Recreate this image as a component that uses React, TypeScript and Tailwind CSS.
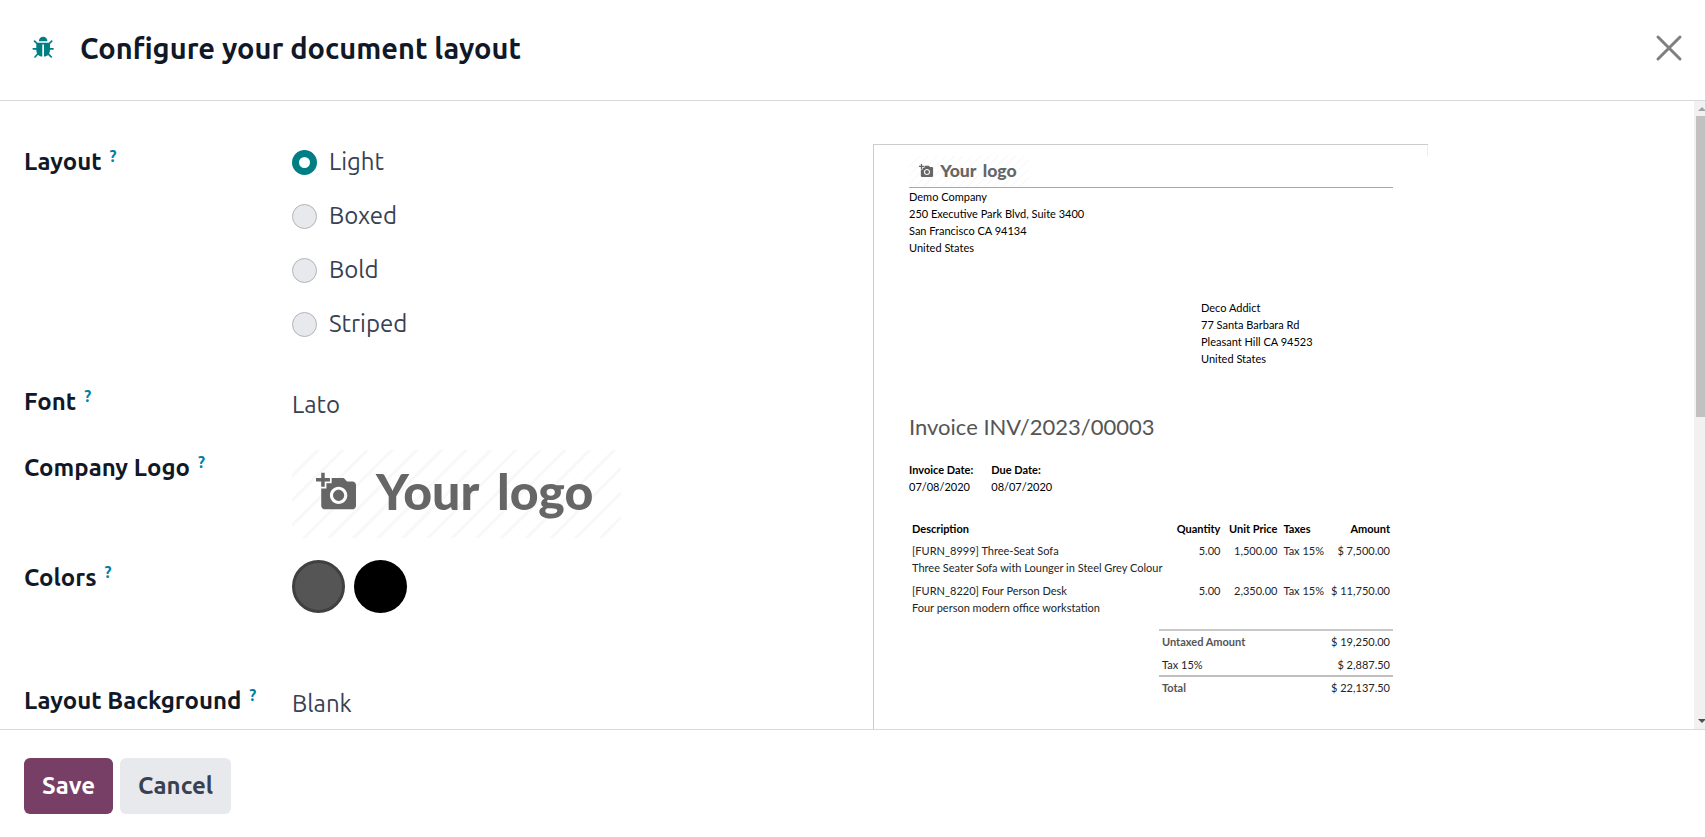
import { useState } from "react";

const layouts = ["Light", "Boxed", "Bold", "Striped"];

const lines = [
  { name: "[FURN_8999] Three-Seat Sofa", note: "Three Seater Sofa with Lounger in Steel Grey Colour", qty: "5.00", price: "1,500.00", tax: "Tax 15%", amount: "$ 7,500.00" },
  { name: "[FURN_8220] Four Person Desk", note: "Four person modern office workstation", qty: "5.00", price: "2,350.00", tax: "Tax 15%", amount: "$ 11,750.00" },
];

const stripes = Array.from({ length: 17 }, (_, i) => -62 + i * 24.7);

function BugIcon() {
  return (
    <svg viewBox="0 0 1792 1792" className="size-6" fill="currentColor" aria-hidden="true">
      <path d="M1632 960q0 26-19 45t-45 19h-224q0 171-67 290l208 209q19 19 19 45t-19 45q-18 19-45 19t-45-19l-198-197q-5 5-15 13t-42 28.5-65 36.5-82 29-97 13v-896h-128v896q-51 0-101.5-13.5t-87-33-66-39-43.5-32.5l-15-14-183 207q-20 21-48 21-24 0-43-16-19-18-20.5-44.5t15.5-46.5l202-227q-58-114-58-274h-224q-26 0-45-19t-19-45 19-45 45-19h224v-294l-173-173q-19-19-19-45t19-45 45-19 45 19l173 173h844l173-173q19-19 45-19t45 19 19 45-19 45l-173 173v294h224q26 0 45 19t19 45zm-480-576h-640q0-133 93.5-226.5t226.5-93.5 226.5 93.5 93.5 226.5z" />
    </svg>
  );
}

function Logo({ className }: { className: string }) {
  return (
    <svg viewBox="0 0 329 88" className={className} role="img" aria-label="Your logo">
      <g stroke="#f8f8f8" strokeWidth="3">
        {stripes.map((x) => (
          <line key={x} x1={x - 2} y1="90" x2={x + 90} y2="-2" />
        ))}
      </g>
      <g fill="#666666">
        <path
          transform="translate(24 21) scale(1.74)"
          d="M3 4V1h2v3h3v2H5v3H3V6H0V4h3zm3 6V7h3V4h7l1.83 2H21c1.1 0 2 .9 2 2v12c0 1.1-.9 2-2 2H5c-1.1 0-2-.9-2-2V10h3zm7 9c2.76 0 5-2.24 5-5s-2.24-5-5-5-5 2.24-5 5 2.24 5 5 5zm-3.2-5c0 1.77 1.43 3.2 3.2 3.2s3.2-1.43 3.2-3.2-1.43-3.2-3.2-3.2-3.2 1.43-3.2 3.2z"
        />
        <g fontSize="50" fontWeight="900" fontFamily="Lato, sans-serif">
          <text x="84" y="60">Your</text>
          <text x="205" y="60">logo</text>
        </g>
      </g>
    </svg>
  );
}

function FieldName({ text, htmlFor }: { text: string; htmlFor?: string }) {
  const content = (
    <>
      {text}
      <sup className="-top-2 ml-2 text-base leading-none text-[#0180a5]">?</sup>
    </>
  );
  const style = "block text-2xl leading-9 font-semibold whitespace-nowrap text-[#111827]";
  return htmlFor ? (
    <label htmlFor={htmlFor} className={style}>{content}</label>
  ) : (
    <span className={style}>{content}</span>
  );
}

function Preview() {
  return (
    <article className="w-[555px] border-t border-l border-[#cccccc] px-[35px] font-['Lato',sans-serif] text-[11px] leading-[17px] text-black">
      <div className="-mx-[35px] h-[11px] border-r border-[#eeeeee]" />
      <div className="border-b border-[#a8a8a8]">
        <Logo className="block h-[31px] w-[119px]" />
      </div>
      <address className="not-italic">
        Demo Company<br />250 Executive Park Blvd, Suite 3400<br />San Francisco CA 94134<br />United States
      </address>
      <address className="mt-[43px] ml-[292px] not-italic">
        Deco Addict<br />77 Santa Barbara Rd<br />Pleasant Hill CA 94523<br />United States
      </address>
      <h2 className="mt-11 text-[22px] leading-8 text-[#555555]">Invoice INV/2023/00003</h2>
      <dl className="mt-[18px] flex gap-[18px]">
        <div>
          <dt className="font-bold">Invoice Date:</dt>
          <dd>07/08/2020</dd>
        </div>
        <div>
          <dt className="font-bold">Due Date:</dt>
          <dd>08/07/2020</dd>
        </div>
      </dl>
      <table className="mt-[22px] w-full text-[#212529]">
        <thead className="text-black">
          <tr className="[&>th]:px-[3px] [&>th]:pt-[3px] [&>th]:pb-0.5">
            <th className="text-left">Description</th>
            <th className="w-[52px] text-right">Quantity</th>
            <th className="w-[57px] text-right whitespace-nowrap">Unit Price</th>
            <th className="w-[46px] text-left">Taxes</th>
            <th className="w-[66px] text-right">Amount</th>
          </tr>
        </thead>
        <tbody>
          {lines.map((l) => (
            <tr key={l.name} className="align-top whitespace-nowrap [&>td]:p-[3px]">
              <td>{l.name}<br />{l.note}</td>
              <td className="text-right">{l.qty}</td>
              <td className="text-right">{l.price}</td>
              <td>{l.tax}</td>
              <td className="text-right">{l.amount}</td>
            </tr>
          ))}
        </tbody>
      </table>
      <table className="mt-2.5 ml-auto w-[234px] text-[#212529] [&_td]:px-[3px] [&_td]:text-right [&_th]:px-[3px] [&_th]:text-left">
        <tbody>
          <tr className="border-t-2 border-[#c8c8c8] [&>*]:pt-0.5 [&>*]:pb-[3px]">
            <th className="text-[#555555]">Untaxed Amount</th>
            <td>$ 19,250.00</td>
          </tr>
          <tr className="[&>*]:pt-[3px] [&>*]:pb-0.5">
            <th className="font-normal">Tax 15%</th>
            <td>$ 2,887.50</td>
          </tr>
          <tr className="border-t-2 border-[#c0c0c0] [&>*]:pt-0.5 [&>*]:pb-[3px]">
            <th className="text-[#555555]">Total</th>
            <td>$ 22,137.50</td>
          </tr>
        </tbody>
      </table>
    </article>
  );
}

export default function App() {
  const [layout, setLayout] = useState("Light");
  return (
    <div className="flex h-screen flex-col bg-white font-['Ubuntu','Noto_Sans',sans-serif] text-[#374151]">
      <header className="flex h-[101px] shrink-0 items-center border-b border-[#d8dadd] pr-[18px] pb-1 pl-8">
        <button type="button" aria-label="Debug" className="text-[#017e84]">
          <BugIcon />
        </button>
        <h1 className="ml-6 text-[29px] leading-10 font-semibold text-[#111827]">Configure your document layout</h1>
        <button type="button" aria-label="Close" className="ml-auto p-1 text-[#7f7f7f]">
          <svg viewBox="0 0 28 28" className="size-7" fill="none" stroke="currentColor" strokeWidth="3" strokeLinecap="round" aria-hidden="true">
            <path d="M3 3l22 22M25 3L3 25" />
          </svg>
        </button>
      </header>

      <div className="flex min-h-0 flex-1">
        <main className="grid min-w-0 flex-1 grid-cols-2 gap-[52px] overflow-hidden px-6 pt-[43px]">
          <form className="grid grid-cols-[268px_1fr] content-start text-2xl leading-9">
            <FieldName text="Layout" />
            <div role="radiogroup" aria-label="Layout" className="flex flex-col gap-[18px]">
              {layouts.map((name) => (
                <label key={name} className="flex items-center gap-3">
                  <input
                    type="radio"
                    name="layout"
                    checked={layout === name}
                    onChange={() => setLayout(name)}
                    className="size-[25px] appearance-none rounded-full border border-[#b3b4b8] bg-[#e7e9ed] checked:border-[7px] checked:border-[#017e84] checked:bg-white"
                  />
                  {name}
                </label>
              ))}
            </div>

            <div className="mt-[42px]"><FieldName text="Font" htmlFor="font" /></div>
            <select id="font" className="mt-[45px] h-9 appearance-none bg-transparent">
              <option>Lato</option>
            </select>

            <div className="mt-[27px]"><FieldName text="Company Logo" /></div>
            <Logo className="mt-[27px] block h-[88px] w-[329px]" />

            <div className="mt-[22px]"><FieldName text="Colors" /></div>
            <div className="mt-[22px] flex gap-[9px]">
              <button type="button" aria-label="Primary color" className="size-[53px] rounded-full border-[3px] border-[#404040] bg-[#555555]" />
              <button type="button" aria-label="Secondary color" className="size-[53px] rounded-full bg-black" />
            </div>

            <div className="mt-[70px]"><FieldName text="Layout Background" htmlFor="background" /></div>
            <select id="background" className="mt-[73px] h-9 appearance-none bg-transparent">
              <option>Blank</option>
            </select>
          </form>
          <Preview />
        </main>
        <div aria-hidden="true" className="flex w-[11px] flex-col overflow-hidden bg-[#f1f1f1] pl-0.5">
          <svg viewBox="0 0 9 15" className="h-[15px] w-[9px] shrink-0" fill="#a3a3a3">
            <path d="M2 10L6 6L10 10Z" />
          </svg>
          <div className="h-[301px] bg-[#c1c1c1]" />
          <svg viewBox="0 0 9 15" className="mt-auto h-[15px] w-[9px] shrink-0" fill="#505050">
            <path d="M2 5L10 5L6 9Z" />
          </svg>
        </div>
      </div>

      <footer className="flex h-[108px] shrink-0 items-start gap-[7px] border-t border-[#d8dadd] px-6 pt-7 text-2xl font-semibold">
        <button type="button" className="h-14 rounded-md bg-[#773e66] px-[18px] text-white">Save</button>
        <button type="button" className="h-14 rounded-md bg-[#e7e9ed] px-[18px]">Cancel</button>
      </footer>
    </div>
  );
}
